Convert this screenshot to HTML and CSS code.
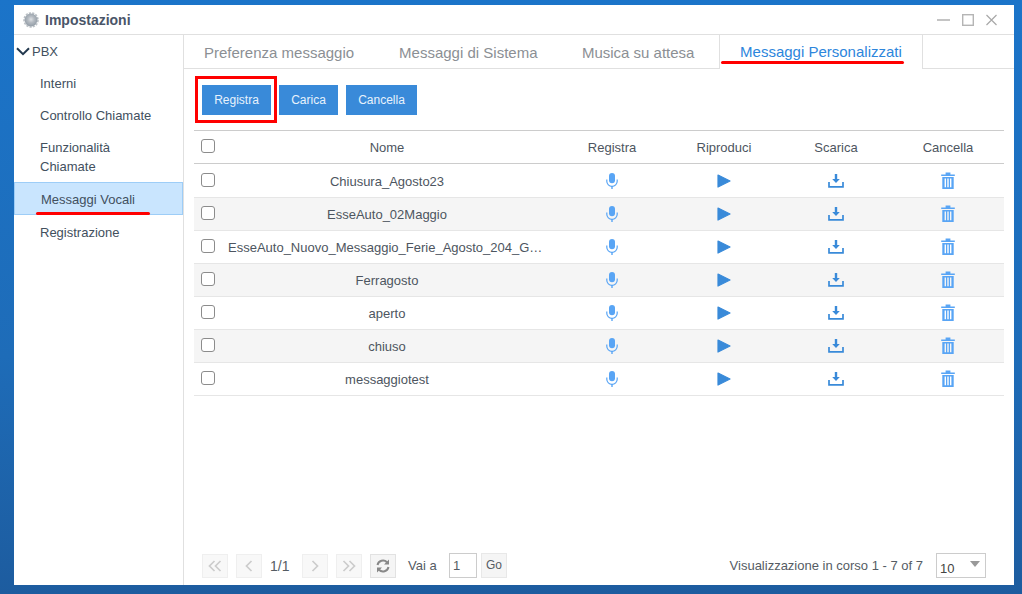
FILE: index.html
```html
<!DOCTYPE html>
<html lang="it">
<head>
  <meta charset="UTF-8">
  <title>Impostazioni</title>
  <link rel="stylesheet" href="styles.css">
</head>
<body>
  <svg width="0" height="0" class="defs">
    <defs>
      <radialGradient id="gear-fill" cx="50%" cy="45%" r="55%">
        <stop offset="0" stop-color="#dde0e4"/>
        <stop offset="0.45" stop-color="#b4bac1"/>
        <stop offset="1" stop-color="#929ca6"/>
      </radialGradient>
    </defs>
    <symbol id="i-mic" viewBox="0 0 12 16">
      <rect x="3" y="0" width="6" height="10.2" rx="3" fill="currentColor"/>
      <path d="M0.8 6.6v1.6a5.2 5.2 0 0 0 10.4 0V6.6" fill="none" stroke="currentColor" stroke-width="1.2"/>
      <path d="M6 13v3" stroke="currentColor" stroke-width="1.4"/>
    </symbol>
    <symbol id="i-play" viewBox="0 0 14 14">
      <path d="M1 1L13 7L1 13Z" fill="currentColor" stroke="currentColor" stroke-width="1.2" stroke-linejoin="round"/>
    </symbol>
    <symbol id="i-down" viewBox="0 0 16 14">
      <path d="M6.8 0h2.4v5h2.6L8 9 4.2 5h2.6z" fill="currentColor"/>
      <path d="M1 8v4.8h14V8" fill="none" stroke="currentColor" stroke-width="1.7"/>
    </symbol>
    <symbol id="i-trash" viewBox="0 0 14 17">
      <path d="M0.2 2.4h13.6v1.7H0.2zM4.6 2.4V0.6h4.8v1.8" fill="currentColor"/>
      <path d="M1.3 4.9h11.4V17H1.3zM3.6 6.6v8.6h1.4V6.6zM6.3 6.6v8.6h1.4V6.6zM9 6.6v8.6h1.4V6.6z" fill="currentColor" fill-rule="evenodd"/>
    </symbol>
  </svg>

  <div class="window">
    <div class="titlebar">
      <svg class="gear" viewBox="0 0 16 16" width="16" height="16">
        <circle cx="8" cy="8" r="7" fill="none" stroke="#bcc1c6" stroke-width="1.6" stroke-dasharray="2.2 1.2"/>
        <circle cx="8" cy="8" r="6.4" fill="url(#gear-fill)"/>
      </svg>
      <span class="title">Impostazioni</span>
      <div class="win-controls">
        <svg viewBox="0 0 13 12" width="13" height="12"><path d="M0 6h13" stroke="#c4c4c4" stroke-width="2"/></svg>
        <svg viewBox="0 0 12 12" width="12" height="12"><rect x="0.7" y="0.7" width="10.6" height="10.6" fill="none" stroke="#b5b5b5" stroke-width="1.4"/></svg>
        <svg viewBox="0 0 11 12" width="11" height="12"><path d="M0.5 1l10 10M10.5 1l-10 10" stroke="#a8a8a8" stroke-width="1.2"/></svg>
      </div>
    </div>

    <div class="content">
      <div class="sidebar">
        <div class="menu-group">
          <svg class="chevron" viewBox="0 0 14 9" width="14" height="9"><path d="M1 1.2l6 6 6-6" fill="none" stroke="#22384e" stroke-width="2"/></svg>
          PBX
        </div>
        <a class="menu-item">Interni</a>
        <a class="menu-item">Controllo Chiamate</a>
        <a class="menu-item">Funzionalità Chiamate</a>
        <a class="menu-item active">Messaggi Vocali<span class="mark mark-menu"></span></a>
        <a class="menu-item">Registrazione</a>
      </div>

      <div class="main">
        <div class="tabs">
          <a class="tab">Preferenza messaggio</a>
          <a class="tab">Messaggi di Sistema</a>
          <a class="tab">Musica su attesa</a>
          <a class="tab active">Messaggi Personalizzati<span class="mark mark-tab"></span></a>
        </div>

        <div class="toolbar">
          <button class="btn btn-rec">Registra<span class="mark-box"></span></button>
          <button class="btn btn-load">Carica</button>
          <button class="btn btn-del">Cancella</button>
        </div>

        <table class="grid">
          <colgroup>
            <col class="col-check"><col class="col-name">
            <col class="col-act"><col class="col-act"><col class="col-act"><col class="col-act">
          </colgroup>
          <thead>
            <tr>
              <th><span class="check"></span></th>
              <th>Nome</th><th>Registra</th><th>Riproduci</th><th>Scarica</th><th>Cancella</th>
            </tr>
          </thead>
          <tbody id="rows"></tbody>
        </table>

        <div class="pager">
          <span class="page-btn"><svg viewBox="0 0 14 12" width="14" height="12"><path d="M6.5 1L1.5 6l5 5M12.5 1l-5 5 5 5" fill="none" stroke="#ccc" stroke-width="1.7"/></svg></span>
          <span class="page-btn"><svg viewBox="0 0 8 12" width="8" height="12"><path d="M6.5 1L1.5 6l5 5" fill="none" stroke="#ccc" stroke-width="1.7"/></svg></span>
          <span class="page-num">1/1</span>
          <span class="page-btn"><svg viewBox="0 0 8 12" width="8" height="12"><path d="M1.5 1l5 5-5 5" fill="none" stroke="#ccc" stroke-width="1.7"/></svg></span>
          <span class="page-btn"><svg viewBox="0 0 14 12" width="14" height="12"><path d="M1.5 1l5 5-5 5M7.5 1l5 5-5 5" fill="none" stroke="#ccc" stroke-width="1.7"/></svg></span>
          <span class="page-btn refresh"><svg viewBox="0 0 14 14" width="14" height="14"><path d="M1.5 6A5.6 5.6 0 0 1 11 3.2M12.5 8A5.6 5.6 0 0 1 3 10.8" fill="none" stroke="#888" stroke-width="2"/><path d="M13 0.5V5.5H8zM1 13.5V8.5H6z" fill="#888"/></svg></span>
          <span class="goto-label">Vai a</span>
          <input class="goto-input" type="text" value="1">
          <span class="go-btn">Go</span>
          <span class="pager-info">Visualizzazione in corso 1 - 7 of 7</span>
          <span class="page-size">10<i class="caret"></i></span>
        </div>
      </div>
    </div>
  </div>

  <script>
    const names = [
      "Chiusura_Agosto23",
      "EsseAuto_02Maggio",
      "EsseAuto_Nuovo_Messaggio_Ferie_Agosto_204_G…",
      "Ferragosto",
      "aperto",
      "chiuso",
      "messaggiotest"
    ];

    function icon(id, cls, w, h) {
      return `<svg class="${cls}" width="${w}" height="${h}"><use href="#${id}"/></svg>`;
    }

    document.getElementById("rows").innerHTML = names.map(n => `
      <tr>
        <td><span class="check"></span></td>
        <td><div class="name${n.endsWith("…") ? " long" : ""}">${n}</div></td>
        <td>${icon("i-mic", "ic-light", 12, 16)}</td>
        <td>${icon("i-play", "ic-dark", 14, 14)}</td>
        <td>${icon("i-down", "ic-dark", 16, 14)}</td>
        <td>${icon("i-trash", "ic-light ic-trash", 14, 17)}</td>
      </tr>`).join("");
  </script>
</body>
</html>
```

FILE: styles.css
```css
html, body {
  margin: 0;
  padding: 0;
  height: 594px;
  overflow: hidden;
}

body {
  font-family: "Liberation Sans", Arial, sans-serif;
  font-size: 13px;
  color: #4d5560;
  background: linear-gradient(180deg, #1b74c9 0%, #1e6cb8 60%, #1d5c9f 100%);
}

.defs {
  position: absolute;
}

.window {
  margin: 5px 8px 0 14px;
  width: 1000px;
  height: 580px;
  background: #fff;
  display: flex;
  flex-direction: column;
}

.titlebar {
  height: 29px;
  border-bottom: 1px solid #e0e0e0;
  display: flex;
  align-items: center;
  padding: 0 17px 0 9px;
  flex: none;
}

.gear {
  margin-right: 6px;
}

.title {
  font-size: 14px;
  font-weight: bold;
  color: #4a5568;
}

.win-controls {
  margin-left: auto;
  margin-top: 1px;
  display: flex;
  gap: 12px;
}

.content {
  flex: 1;
  display: flex;
  min-height: 0;
}

.sidebar {
  width: 169px;
  border-right: 1px solid #e0e0e0;
  flex: none;
  color: #42505e;
}

.menu-group {
  height: 32px;
  box-sizing: border-box;
  padding: 1px 0 0 2px;
  display: flex;
  align-items: center;
  gap: 2px;
}

.menu-item {
  display: block;
  position: relative;
  padding: 6.5px 26px;
  line-height: 19px;
}

.menu-item.active {
  background: #c9e5fe;
  border: 1px solid #9dcdf7;
  padding: 7px 26px 6px 26px;
  width: 169px;
  box-sizing: border-box;
  height: 33px;
}

.menu-item.active + .menu-item {
  padding-top: 7.5px;
}

.mark {
  position: absolute;
  height: 3px;
  background: #f00;
  border-radius: 2px;
}

.mark-menu {
  left: 21px;
  width: 114px;
  bottom: -1px;
}

.mark-box {
  position: absolute;
  left: -7px;
  top: -9px;
  width: 82px;
  height: 47px;
  box-sizing: border-box;
  border: 3px solid #f00;
}

.main {
  flex: 1;
  min-width: 0;
  display: flex;
  flex-direction: column;
}

.tabs {
  height: 34px;
  box-sizing: border-box;
  border-bottom: 1px solid #e0e0e0;
  display: flex;
  font-size: 15px;
  flex: none;
}

.tab {
  padding: 9px 20px 0;
  height: 33px;
  box-sizing: border-box;
  color: #8b8f94;
  margin-right: 5px;
  line-height: 18px;
}

.tab:nth-child(3) {
  margin-left: -0.6px;
  margin-right: 5.6px;
}

.tab.active {
  position: relative;
  color: #2d86dc;
  background: #fff;
  height: 34px;
  padding-top: 8px;
  border-left: 1px solid #e0e0e0;
  border-right: 1px solid #e0e0e0;
  margin: 0 0 0 -1px;
}

.mark-tab {
  left: 1px;
  width: 183px;
  top: 26px;
}

.toolbar {
  display: flex;
  gap: 8px;
  padding: 16px 0 15px 18px;
  flex: none;
}

.btn {
  position: relative;
  height: 30px;
  padding: 0;
  border: none;
  background: #398ad9;
  color: #e8f2fc;
  font: 12px "Liberation Sans", Arial, sans-serif;
}

.btn-rec { width: 69px; }
.btn-load { width: 59px; }
.btn-del { width: 71px; }

.grid {
  width: 810px;
  margin-left: 10px;
  border-collapse: collapse;
  table-layout: fixed;
  flex: none;
}

.col-check { width: 24px; }
.col-name { width: 338px; }
.col-act { width: 112px; }

.grid th {
  height: 32px;
  font-weight: normal;
  border-top: 1px solid #ccc;
  border-bottom: 1px solid #ccc;
  padding: 0;
  color: #4d5560;
}

.grid td {
  height: 32px;
  padding: 0;
  text-align: center;
  border-bottom: 1px solid #e6e6e6;
  color: #4d5560;
}

.grid tbody tr:first-child td {
  height: 33px;
}

.grid tbody tr:first-child .name {
  padding-top: 1px;
}

.grid tbody tr:nth-child(even) td {
  background: #f5f5f5;
}

.grid td svg {
  display: block;
  margin: 0 auto;
}

.grid td .ic-trash {
  margin-bottom: 1px;
}

.check {
  display: block;
  width: 12px;
  height: 12px;
  margin-left: 7px;
  border: 1.5px solid #8c8c8c;
  border-radius: 3px;
  background: #fff;
  position: relative;
  top: -1px;
}

.name {
  padding: 0 10px;
  white-space: nowrap;
}

.name.long {
  text-align: left;
}

.ic-light { color: #59a5f5; }
.ic-dark { color: #398ad9; }

.pager {
  margin-top: auto;
  height: 25px;
  margin-bottom: 7px;
  padding-left: 18px;
  padding-right: 28px;
  display: flex;
  align-items: center;
  color: #555c64;
}

.page-btn {
  width: 26px;
  height: 24px;
  box-sizing: border-box;
  border: 1px solid #efefef;
  background: #f8f8f8;
  display: flex;
  align-items: center;
  justify-content: center;
  margin-right: 8px;
  flex: none;
}

.page-btn.refresh {
  border-color: #e2e2e2;
  background: #f5f5f5;
  margin-right: 12px;
}

.page-num {
  font-size: 14px;
  width: 32px;
  text-align: left;
}

.goto-label {
  width: 41px;
}

.goto-input {
  width: 28px;
  height: 25px;
  box-sizing: border-box;
  border: 1px solid #ccc;
  padding: 0 0 0 3px;
  font: 13px "Liberation Sans", Arial, sans-serif;
  color: #555c64;
  margin-right: 4px;
  outline: none;
}

.go-btn {
  width: 26px;
  height: 25px;
  box-sizing: border-box;
  border: 1px solid #e8e8e8;
  background: #f5f5f5;
  font-size: 12px;
  line-height: 23px;
  text-align: center;
}

.pager-info {
  margin-left: auto;
  margin-right: 13px;
}

.page-size {
  position: relative;
  width: 50px;
  height: 25px;
  box-sizing: border-box;
  border: 1px solid #ccc;
  padding: 6px 0 0 3px;
  line-height: 17px;
  color: #444;
}

.caret {
  position: absolute;
  top: 7px;
  right: 5px;
  border-left: 5px solid transparent;
  border-right: 5px solid transparent;
  border-top: 6px solid #999;
}
```
